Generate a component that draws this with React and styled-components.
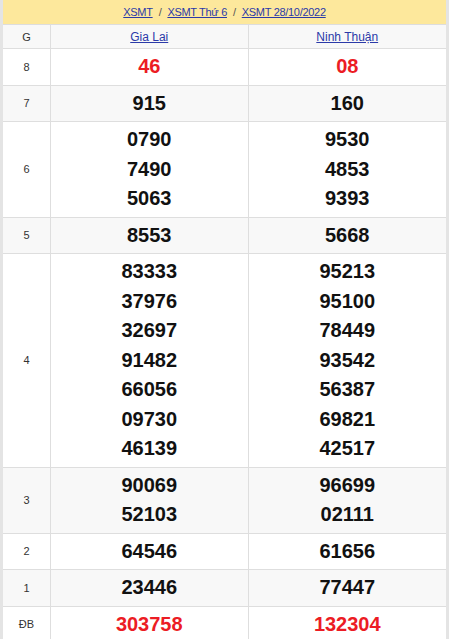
import React from "react";
import styled, { createGlobalStyle } from "styled-components";

const GlobalStyle = createGlobalStyle`
  html, body {
    margin: 0;
    padding: 0;
    background: #e4e4e4;
    font-family: "Liberation Sans", Arial, sans-serif;
  }
`;

const results = [
  { label: "8", a: ["46"], b: ["08"], red: true },
  { label: "7", a: ["915"], b: ["160"] },
  { label: "6", a: ["0790", "7490", "5063"], b: ["9530", "4853", "9393"] },
  { label: "5", a: ["8553"], b: ["5668"] },
  {
    label: "4",
    a: ["83333", "37976", "32697", "91482", "66056", "09730", "46139"],
    b: ["95213", "95100", "78449", "93542", "56387", "69821", "42517"],
  },
  { label: "3", a: ["90069", "52103"], b: ["96699", "02111"] },
  { label: "2", a: ["64546"], b: ["61656"] },
  { label: "1", a: ["23446"], b: ["77447"] },
  { label: "ĐB", a: ["303758"], b: ["132304"], red: true },
];

function App() {
  return (
    <>
      <GlobalStyle />
      <Page>
        <Breadcrumb>
          <a href="#">XSMT</a>
          <Sep>/</Sep>
          <a href="#">XSMT Thứ 6</a>
          <Sep>/</Sep>
          <a href="#">XSMT 28/10/2022</a>
        </Breadcrumb>
        <Table>
          <Row shaded>
            <LabelCell>G</LabelCell>
            <HeadCell><a href="#">Gia Lai</a></HeadCell>
            <HeadCell><a href="#">Ninh Thuận</a></HeadCell>
          </Row>
          {results.map((r, i) => (
            <Row key={r.label} shaded={i % 2 === 1}>
              <LabelCell>{r.label}</LabelCell>
              <NumCell>
                {r.a.map((n) => (
                  <Num key={n} red={r.red}>{n}</Num>
                ))}
              </NumCell>
              <NumCell>
                {r.b.map((n) => (
                  <Num key={n} red={r.red}>{n}</Num>
                ))}
              </NumCell>
            </Row>
          ))}
        </Table>
      </Page>
    </>
  );
}

const Page = styled.div`
  margin: 0 3px;
  background: #fff;
`;

const Breadcrumb = styled.div`
  display: flex;
  justify-content: center;
  align-items: center;
  height: 25px;
  background: #fde89c;
  font-size: 11px;
  letter-spacing: -0.3px;
  border-bottom: 1px solid #ddd;
  box-sizing: border-box;

  a {
    color: #2b3aa8;
    text-decoration: underline;
  }
`;

const Sep = styled.span`
  color: #555;
  margin: 0 6px;
`;

const Table = styled.div`
  display: flex;
  flex-direction: column;
`;

const Row = styled.div`
  display: grid;
  grid-template-columns: 48px 1fr 1fr;
  background: ${(p) => (p.shaded ? "#f8f8f8" : "#fff")};
  border-bottom: 1px solid #dedede;
`;

const LabelCell = styled.div`
  display: flex;
  align-items: center;
  justify-content: center;
  font-size: 11px;
  color: #333;
  border-right: 1px solid #dedede;
`;

const HeadCell = styled.div`
  display: flex;
  align-items: center;
  justify-content: center;
  height: 23px;
  font-size: 12px;
  border-right: 1px solid #dedede;

  &:last-child {
    border-right: none;
  }

  a {
    color: #2b3aa8;
    text-decoration: underline;
  }
`;

const NumCell = styled.div`
  display: flex;
  flex-direction: column;
  align-items: center;
  padding: 3px 0;
  border-right: 1px solid #dedede;

  &:last-child {
    border-right: none;
  }
`;

const Num = styled.div`
  font-size: 20px;
  font-weight: bold;
  line-height: 29.5px;
  color: ${(p) => (p.red ? "#ec1c24" : "#111")};
`;

export default App;
